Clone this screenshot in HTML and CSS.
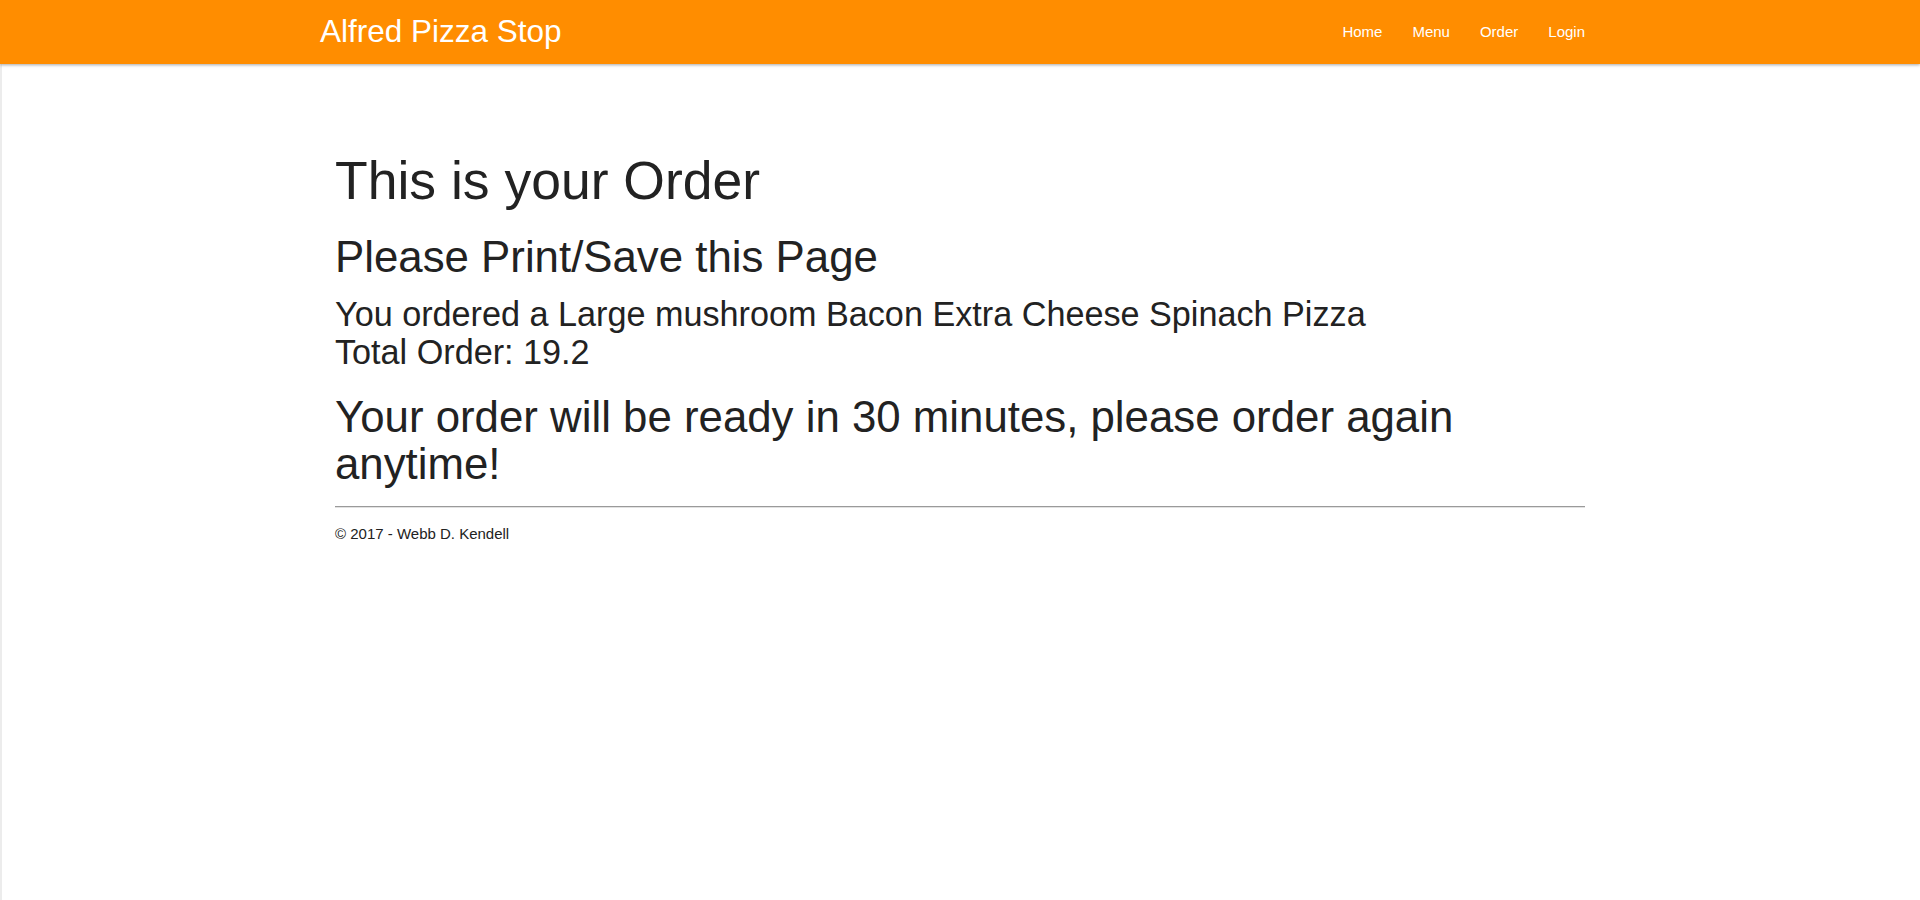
FILE: index.html
```html
<!DOCTYPE html>
<html lang="en">
<head>
<meta charset="utf-8">
<title>Order - Alfred Pizza Stop</title>
<link rel="stylesheet" href="styles.css">
</head>
<body>
<header class="navbar">
  <div class="navbar-inner">
    <a class="brand" href="#">Alfred Pizza Stop</a>
    <ul class="nav-links">
      <li><a href="#">Home</a></li>
      <li><a href="#">Menu</a></li>
      <li><a href="#">Order</a></li>
      <li><a href="#">Login</a></li>
    </ul>
  </div>
</header>
<main class="container body-content">
  <h1 class="title">This is your Order</h1>
  <h2 class="subtitle">Please Print/Save this Page</h2>
  <h3 class="summary">You ordered a Large mushroom Bacon Extra Cheese Spinach Pizza<br>Total Order: 19.2</h3>
  <h2 class="ready">Your order will be ready in 30 minutes, please order again anytime!</h2>
  <hr class="divider">
  <footer class="footer">
    <p>&copy; 2017 - Webb D. Kendell</p>
  </footer>
</main>
</body>
</html>
```

FILE: styles.css
```css
html, body {
  margin: 0;
  padding: 0;
}

body {
  font-family: "Liberation Sans", Arial, Helvetica, sans-serif;
  color: #222;
  background: #fff;
  min-height: 100vh;
  box-shadow: inset 2px 0 0 #ececec;
}

.navbar {
  height: 64px;
  background: #ff8d00;
  box-shadow: 0 1px 3px rgba(0, 0, 0, 0.35);
  position: relative;
  z-index: 2;
}

.navbar-inner {
  width: 1280px;
  margin: 0 auto;
  height: 100%;
  display: flex;
  align-items: center;
  justify-content: space-between;
}

.brand {
  color: #fff;
  text-decoration: none;
  font-size: 31.5px;
  line-height: 1;
}

.nav-links {
  list-style: none;
  margin: 0;
  padding: 0;
  display: flex;
}

.nav-links a {
  display: block;
  padding: 0 15px;
  color: #fff;
  text-decoration: none;
  font-size: 15px;
  line-height: 20px;
}

.container {
  width: 1280px;
  margin: 0 auto;
  padding: 0 15px;
  box-sizing: border-box;
}

.body-content {
  padding-top: 88px;
}

.title,
.subtitle,
.summary,
.ready {
  font-weight: 400;
  margin: 0;
}

.title {
  font-size: 53.5px;
  line-height: 1.1;
}

.subtitle {
  font-size: 43.8px;
  line-height: 1.1;
  margin-top: 22px;
}

.summary {
  font-size: 34.2px;
  line-height: 1.1;
  margin-top: 15px;
}

.ready {
  font-size: 43.8px;
  line-height: 47px;
  margin-top: 22px;
}

.divider {
  border: 0;
  border-top: 1px solid #9a9a9a;
  border-bottom: 1px solid #e2e2e2;
  margin: 19px 0 0;
}

.footer p {
  margin: 16px 0 0;
  font-size: 15px;
  line-height: 20px;
}
```
